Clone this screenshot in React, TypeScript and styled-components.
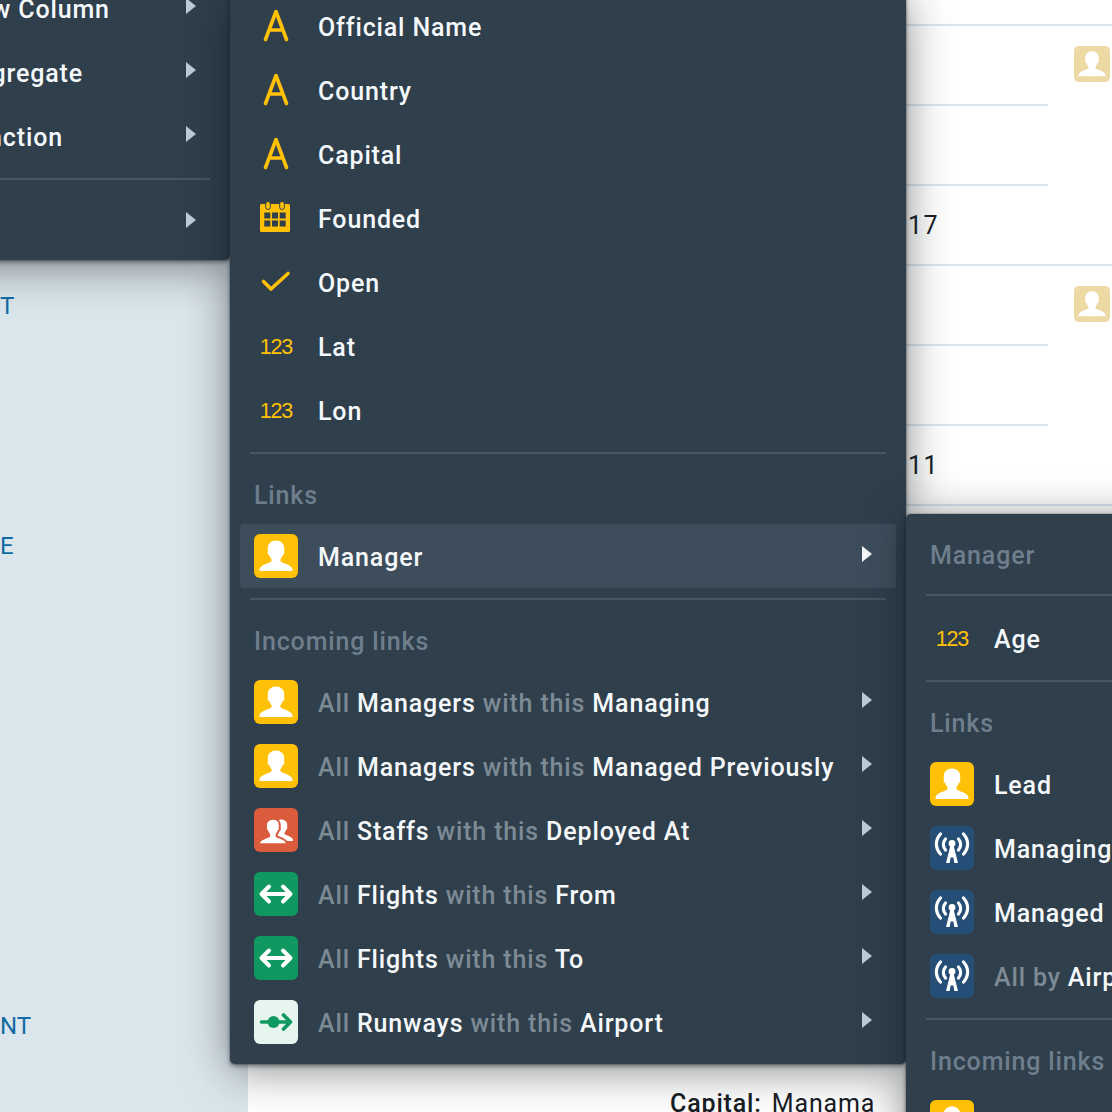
import React from "react";
import styled, { createGlobalStyle } from "styled-components";

const GlobalStyle = createGlobalStyle`
  html, body {
    margin: 0;
    height: 100%;
    overflow: hidden;
    background: #fff;
    font-family: Roboto, "Liberation Sans", sans-serif;
  }
`;

const Page = styled.div`
  position: relative;
  display: grid;
  grid-template-columns: 248px 1fr;
  height: 1112px;
  overflow: hidden;
`;

const SidePanel = styled.aside`
  padding-top: 25px;
  background: #dbe5ec;
`;

const SideBlock = styled.div`
  height: 240px;
  padding-top: 27px;
  box-sizing: border-box;
  color: #106ba3;
  font: 400 24px/28px Roboto, sans-serif;
`;

const Records = styled.main`
  padding-top: 24px;
`;

const Record = styled.section`
  display: grid;
  grid-template-columns: 800px 64px;
  border-top: 2px solid #dce6ee;
  height: 238px;
`;

const Field = styled.div`
  height: 78px;
  padding-left: 660px;
  box-sizing: border-box;
  color: #182026;
  font: 400 25px/80px Roboto, sans-serif;
  letter-spacing: 1.4px;

  & + & {
    border-top: 2px solid #dce6ee;
    height: 80px;
  }
`;

const AvatarCell = styled.div`
  padding: 20px 0 0 26px;
`;

const Caption = styled.p`
  margin: 0;
  padding: 0 0 0 422px;
  color: #182026;
  font: 400 25px/28px Roboto, sans-serif;
  letter-spacing: 0.85px;
  white-space: nowrap;

  b {
    font-weight: 500;
    margin-right: 10px;
  }
`;

const Spacer = styled.div`
  height: 106px;
`;

const Menu = styled.nav<{ $left: number; $top: number; $width: number; $pad: number }>`
  position: absolute;
  left: ${(p) => p.$left}px;
  top: ${(p) => p.$top}px;
  width: ${(p) => p.$width}px;
  box-sizing: border-box;
  padding-bottom: ${(p) => p.$pad}px;
  border-radius: 5px;
  background: #2f3f4c;
  box-shadow: 0 0 0 1px rgba(16, 22, 26, 0.12), 0 2px 4px rgba(16, 22, 26, 0.5), 0 6px 44px rgba(16, 22, 26, 0.5);
`;

const Row = styled.div<{ $active?: boolean; $indent?: number }>`
  display: flex;
  align-items: center;
  height: 64px;
  margin: 0 10px;
  padding-left: ${(p) => p.$indent ?? 14}px;
  border-radius: 4px;
  background: ${(p) => (p.$active ? "#3e4d5c" : "transparent")};
  color: #f5f8fa;
  font: 500 25px/28px Roboto, sans-serif;
  letter-spacing: 0.85px;
  white-space: nowrap;
`;

const IconSlot = styled.span`
  flex: none;
  display: flex;
  align-items: center;
  justify-content: center;
  width: 44px;
  height: 44px;
  margin-right: 20px;

  svg {
    display: block;
  }
`;

const Numeric = styled.span`
  position: relative;
  top: 1px;
  color: #ffc107;
  font: 400 21.5px/44px "Liberation Sans", sans-serif;
  letter-spacing: -1.2px;
`;

const RowLabel = styled.span`
  position: relative;
  top: 2px;
`;

const Faint = styled.span`
  color: #7d8a94;
`;

const Arrow = styled.span<{ $bright?: boolean }>`
  margin-left: auto;
  margin-right: 24px;
  margin-bottom: 4px;
  width: 0;
  height: 0;
  border-style: solid;
  border-width: 8px 0 8px 10px;
  border-color: transparent transparent transparent ${(p) => (p.$bright ? "#f5f8fa" : "#bfccd6")};
`;

const Separator = styled.hr`
  height: 2px;
  margin: 10px 20px;
  border: 0;
  background: #485663;
`;

const HeaderSeparator = styled(Separator)`
  margin-bottom: 0;
`;

const Header = styled.div`
  padding: 28px 24px 14px;
  color: #6e7e8c;
  font: 500 25px/28px Roboto, sans-serif;
  letter-spacing: 0.85px;
  white-space: nowrap;
`;

const Tile = styled.svg<{ $size?: number }>`
  width: ${(p) => p.$size ?? 44}px;
  height: ${(p) => p.$size ?? 44}px;
`;

const PERSON =
  "M22 6.500c-4.800 0-8.300 3.200-8.300 7.800 0 1 .1 2 .3 2.900-.7.2-.5 1.700 0 2.700.3.6.7.9 1.200 1 .5 1.600 1.300 3 2.300 4v2.500c-2.600 1.700-9.200 3-11.400 6.400-.5.9-.7 1.700-.5 3.200h32.800c.2-1.500 0-2.300-.5-3.200-2.200-3.400-8.800-4.700-11.400-6.400v-2.500c1-1 1.800-2.400 2.300-4 .5-.1.9-.4 1.200-1 .5-1 .7-2.500 0-2.700.2-.9.3-1.900.3-2.900 0-4.600-3.500-7.800-8.300-7.800z";

const PersonTile = ({ size, faded }: { size?: number; faded?: boolean }) => (
  <Tile $size={size} viewBox="0 0 44 44">
    <rect width="44" height="44" rx="6" fill={faded ? "#ecd9a3" : "#ffc107"} />
    <path d={PERSON} fill="#fff" />
  </Tile>
);

const StaffTile = () => (
  <Tile viewBox="0 0 44 44">
    <rect width="44" height="44" rx="6" fill="#db5c3d" />
    <path d={PERSON} fill="#fff" transform="translate(12 7) scale(.7)" />
    <path
      d={PERSON}
      fill="#fff"
      stroke="#db5c3d"
      strokeWidth="2.400"
      transform="translate(.4 5.200) scale(.84)"
    />
  </Tile>
);

const LinkTile = () => (
  <Tile viewBox="0 0 44 44">
    <rect width="44" height="44" rx="6" fill="#0f9960" />
    <path
      d="M8 22h28M15 14.500 7.500 22l7.500 7.500M29 14.500l7.500 7.500-7.500 7.500"
      fill="none"
      stroke="#fff"
      strokeWidth="4"
      strokeLinecap="round"
      strokeLinejoin="round"
    />
  </Tile>
);

const RunwayTile = () => (
  <Tile viewBox="0 0 44 44">
    <rect width="44" height="44" rx="6" fill="#e6f5ee" />
    <circle cx="19.500" cy="22" r="6" fill="#0f9960" />
    <path
      d="M7.500 22H36M29.500 15l7 7-7 7"
      fill="none"
      stroke="#0f9960"
      strokeWidth="3.600"
      strokeLinecap="round"
      strokeLinejoin="round"
    />
  </Tile>
);

const TowerTile = () => (
  <Tile viewBox="0 0 44 44">
    <rect width="44" height="44" rx="6" fill="#264f78" />
    <g fill="none" stroke="#fff" strokeWidth="3.200" strokeLinecap="round">
      <path d="M10.500 8C5 14 5 22 10.500 28M33.500 8C39 14 39 22 33.500 28" />
      <path d="M15.500 13c-2.800 3.300-2.800 7.700 0 11M28.500 13c2.800 3.300 2.800 7.700 0 11" />
    </g>
    <circle cx="22" cy="17.500" r="3.400" fill="#fff" />
    <path d="M20.800 18h2.400l4.800 19h-3.600l-1-5.500h-2.800l-1 5.500h-3.600z" fill="#fff" />
  </Tile>
);

const LetterIcon = () => (
  <Tile viewBox="0 0 44 44">
    <path
      d="M11.500 35.500 22 7.500l10.500 28M15 26h14"
      fill="none"
      stroke="#ffc107"
      strokeWidth="3.600"
      strokeLinecap="round"
      strokeLinejoin="round"
    />
  </Tile>
);

const CalendarIcon = () => (
  <Tile viewBox="0 0 44 44">
    <rect x="6" y="8" width="30" height="28" rx="1.500" fill="#ffc107" />
    <g fill="#2f3f4c">
      <rect x="10.300" y="16.500" width="6" height="6" />
      <rect x="18" y="16.500" width="6" height="6" />
      <rect x="25.700" y="16.500" width="6" height="6" />
      <rect x="10.300" y="24.500" width="6" height="6" />
      <rect x="18" y="24.500" width="6" height="6" />
      <rect x="25.700" y="24.500" width="6" height="6" />
    </g>
    <g fill="#ffc107" stroke="#2f3f4c" strokeWidth="1">
      <rect x="11.700" y="5.500" width="4.600" height="8" rx="2.300" />
      <rect x="25.700" y="5.500" width="4.600" height="8" rx="2.300" />
    </g>
  </Tile>
);

const CheckIcon = () => (
  <Tile viewBox="0 0 44 44">
    <path
      d="M9.500 21.500 17 29l17-15.500"
      fill="none"
      stroke="#ffc107"
      strokeWidth="3.600"
      strokeLinecap="round"
      strokeLinejoin="round"
    />
  </Tile>
);

const NumberIcon = () => <Numeric>123</Numeric>;

type Part = [string, boolean?];

const MenuRow = ({
  icon,
  parts,
  arrow = true,
  active,
  indent,
}: {
  icon?: React.ReactNode;
  parts: Part[];
  arrow?: boolean;
  active?: boolean;
  indent?: number;
}) => (
  <Row $active={active} $indent={indent}>
    {icon && <IconSlot>{icon}</IconSlot>}
    <RowLabel>
      {parts.map(([text, faint], i) => (faint ? <Faint key={i}>{text}</Faint> : <span key={i}>{text}</span>))}
    </RowLabel>
    {arrow && <Arrow $bright={active} />}
  </Row>
);

const incoming: { icon: React.ReactNode; from: string; via: string }[] = [
  { icon: <PersonTile />, from: "Managers", via: "Managing" },
  { icon: <PersonTile />, from: "Managers", via: "Managed Previously" },
  { icon: <StaffTile />, from: "Staffs", via: "Deployed At" },
  { icon: <LinkTile />, from: "Flights", via: "From" },
  { icon: <LinkTile />, from: "Flights", via: "To" },
  { icon: <RunwayTile />, from: "Runways", via: "Airport" },
];

const properties: { icon: React.ReactNode; name: string }[] = [
  { icon: <LetterIcon />, name: "Official Name" },
  { icon: <LetterIcon />, name: "Country" },
  { icon: <LetterIcon />, name: "Capital" },
  { icon: <CalendarIcon />, name: "Founded" },
  { icon: <CheckIcon />, name: "Open" },
  { icon: <NumberIcon />, name: "Lat" },
  { icon: <NumberIcon />, name: "Lon" },
];

export default function App() {
  return (
    <>
      <GlobalStyle />
      <Page>
        <SidePanel>
          <SideBlock />
          <SideBlock>T</SideBlock>
          <SideBlock>E</SideBlock>
          <SideBlock />
          <SideBlock>NT</SideBlock>
        </SidePanel>
        <Records>
          <Record>
            <div>
              <Field />
              <Field />
              <Field>17</Field>
            </div>
            <AvatarCell>
              <PersonTile size={36} faded />
            </AvatarCell>
          </Record>
          <Record>
            <div>
              <Field />
              <Field />
              <Field>11</Field>
            </div>
            <AvatarCell>
              <PersonTile size={36} faded />
            </AvatarCell>
          </Record>
          <Record />
          <Record />
          <Spacer />
          <Caption>
            <b>Capital:</b>Manama
          </Caption>
        </Records>

        <Menu $left={-100} $top={-24} $width={330} $pad={6}>
          <MenuRow indent={49} parts={[["New Column"]]} />
          <MenuRow indent={49} parts={[["Aggregate"]]} />
          <MenuRow indent={49} parts={[["Function"]]} />
          <Separator />
          <MenuRow indent={49} parts={[[""]]} />
        </Menu>

        <Menu $left={230} $top={-6} $width={676} $pad={10}>
          {properties.map((p) => (
            <MenuRow key={p.name} icon={p.icon} parts={[[p.name]]} arrow={false} />
          ))}
          <HeaderSeparator />
          <Header>Links</Header>
          <MenuRow icon={<PersonTile />} parts={[["Manager"]]} active />
          <HeaderSeparator />
          <Header>Incoming links</Header>
          {incoming.map((r) => (
            <MenuRow
              key={r.from + r.via}
              icon={r.icon}
              parts={[["All ", true], [r.from], [" with this ", true], [r.via]]}
            />
          ))}
        </Menu>

        <Menu $left={906} $top={514} $width={320} $pad={10}>
          <Header>Manager</Header>
          <Separator />
          <MenuRow icon={<NumberIcon />} parts={[["Age"]]} arrow={false} />
          <HeaderSeparator />
          <Header>Links</Header>
          <MenuRow icon={<PersonTile />} parts={[["Lead"]]} arrow={false} />
          <MenuRow icon={<TowerTile />} parts={[["Managing"]]} arrow={false} />
          <MenuRow icon={<TowerTile />} parts={[["Managed"]]} arrow={false} />
          <MenuRow icon={<TowerTile />} parts={[["All by ", true], ["Airport"]]} arrow={false} />
          <HeaderSeparator />
          <Header>Incoming links</Header>
          <MenuRow icon={<PersonTile />} parts={[["All Managers", true]]} arrow={false} />
        </Menu>
      </Page>
    </>
  );
}
